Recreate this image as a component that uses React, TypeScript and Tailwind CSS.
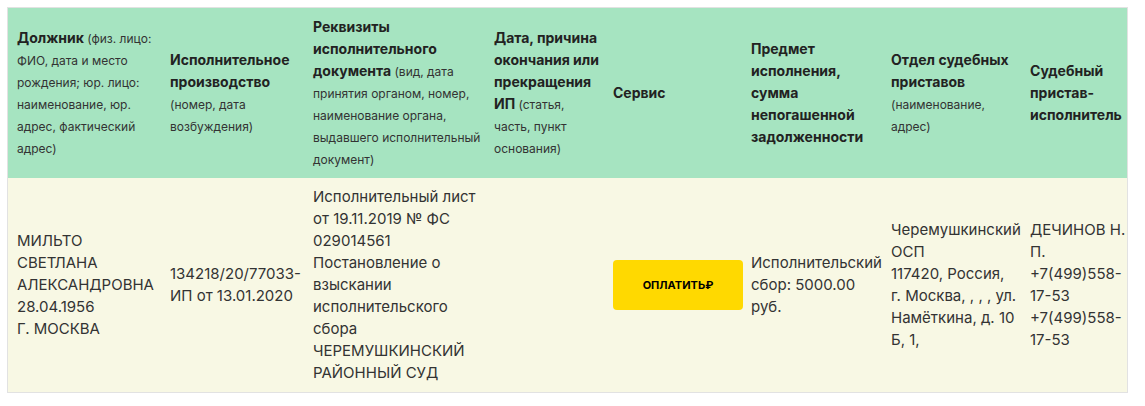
import React from "react";

const th = "align-middle text-left pl-[9px] pr-[2px] py-[8px] font-bold text-[14px] leading-[22px] text-[#222]";
const sub = "font-normal text-[12px] leading-[16px] text-[#333]";
const td = "align-middle text-left pl-[9px] pr-[2px] py-[8px] text-[15px] leading-[22px] text-[#333]";

export default function App() {
  return (
    <div className="bg-white w-[1145px] h-[406px] pl-[7px] pt-[7px]" style={{ fontFamily: "Inter, 'Noto Sans', sans-serif" }}>
      <div className="w-[1121px] border border-[#e2e2e2] overflow-hidden">
        <table className="table-fixed border-collapse w-[1135px]">
          <colgroup>
            <col className="w-[153px]" />
            <col className="w-[143px]" />
            <col className="w-[181px]" />
            <col className="w-[119px]" />
            <col className="w-[138px]" />
            <col className="w-[140px]" />
            <col className="w-[139px]" />
            <col className="w-[122px]" />
          </colgroup>
          <thead>
            <tr className="bg-[#a6e4c1]">
              <th className={th}>
                Должник <span className={sub}>(физ. лицо: ФИО, дата и место рождения; юр. лицо: наименование, юр. адрес, фактический адрес)</span>
              </th>
              <th className={th}>
                Исполнительное производство <span className={sub}>(номер, дата возбуждения)</span>
              </th>
              <th className={th}>
                Реквизиты исполнительного документа <span className={sub}>(вид, дата принятия органом, номер, наименование органа, выдавшего исполнительный документ)</span>
              </th>
              <th className={th}>
                Дата, причина окончания или прекращения ИП <span className={sub}>(статья, часть, пункт основания)</span>
              </th>
              <th className={th}>Сервис</th>
              <th className={th}>Предмет исполнения, сумма непогашенной задолженности</th>
              <th className={th}>
                Отдел судебных приставов <span className={sub}>(наименование, адрес)</span>
              </th>
              <th className={th}>Судебный пристав-исполнитель</th>
            </tr>
          </thead>
          <tbody>
            <tr className="bg-[#f8f8e4]">
              <td className={td}>
                МИЛЬТО<br />СВЕТЛАНА<br />АЛЕКСАНДРОВНА<br />28.04.1956<br />Г. МОСКВА
              </td>
              <td className={td}>134218/20/77033-ИП от 13.01.2020</td>
              <td className={td}>
                Исполнительный лист от 19.11.2019 № ФС 029014561<br />Постановление о взыскании исполнительского сбора<br />ЧЕРЕМУШКИНСКИЙ РАЙОННЫЙ СУД
              </td>
              <td className={td}></td>
              <td className={td}>
                <button className="w-[130px] h-[50px] rounded-[4px] bg-[#ffd900] text-[11px] font-bold uppercase text-black flex items-center justify-center">
                  ОПЛАТИТЬ₽
                </button>
              </td>
              <td className={td}>Исполнительский сбор: 5000.00 руб.</td>
              <td className={td}>
                Черемушкинский ОСП<br />117420, Россия, г.{"\u00a0"}Москва, , , , ул. Намёткина, д. 10 Б, 1,
              </td>
              <td className={td}>
                ДЕЧИНОВ Н. П.<br />+7(499)558-17-53<br />+7(499)558-17-53
              </td>
            </tr>
          </tbody>
        </table>
      </div>
    </div>
  );
}
